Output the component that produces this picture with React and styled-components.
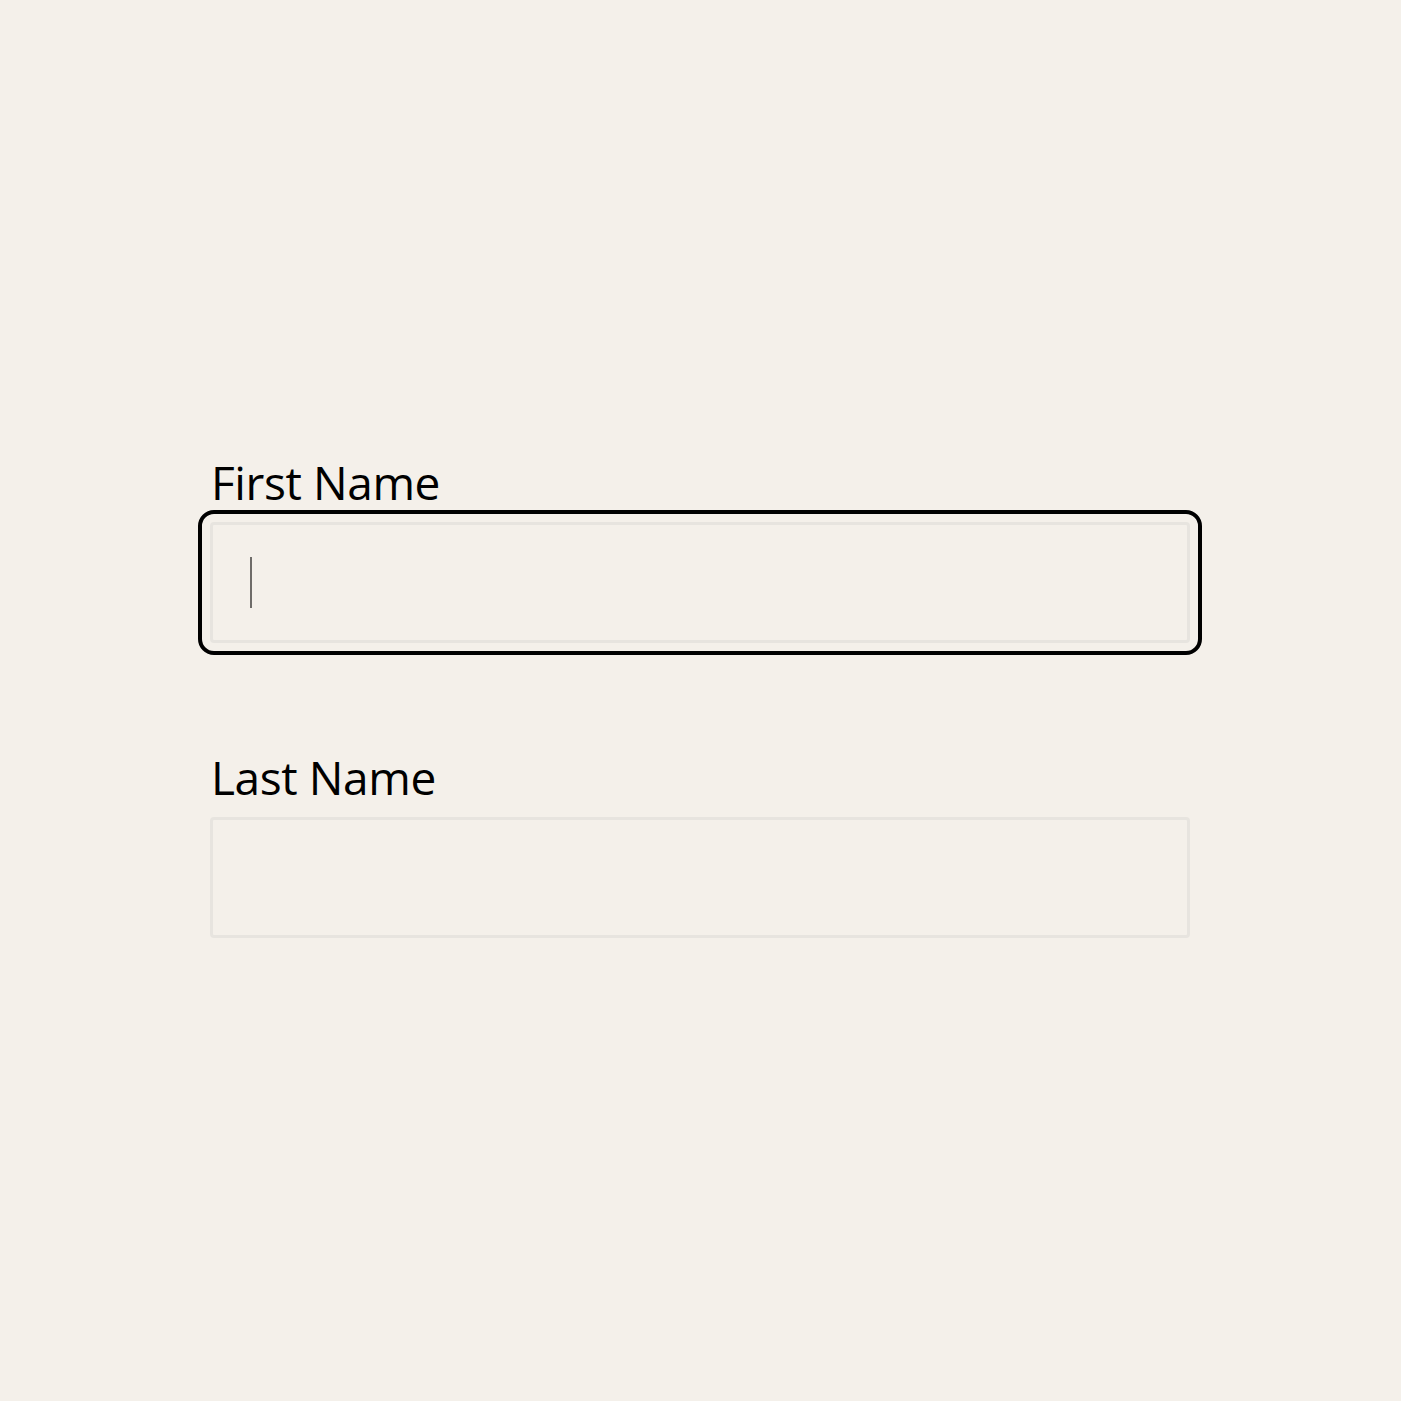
import React from 'react';
import styled, { createGlobalStyle } from 'styled-components';

const GlobalStyle = createGlobalStyle`
  html, body {
    margin: 0;
    padding: 0;
    background: #f4f0ea;
  }
  body {
    font-family: "Open Sans", "Noto Sans", sans-serif;
    color: #000;
  }
`;

const Page = styled.div`
  min-height: 1401px;
  padding: 452px 0 0 210px;
  box-sizing: border-box;
`;

const Form = styled.form`
  width: 980px;
  display: flex;
  flex-direction: column;
  gap: 104px;
`;

const Field = styled.div`
  display: flex;
  flex-direction: column;
  gap: 10px;
`;

const Label = styled.label`
  font-size: 46px;
  line-height: 60px;
  letter-spacing: -0.4px;
  padding-left: 1px;
`;

const InputWrap = styled.div`
  position: relative;
  height: 121px;
  border-radius: 4px;
  outline: ${(p) => (p.$focused ? '4px solid #000' : 'none')};
  outline-offset: 8px;
`;

const Input = styled.input`
  width: 100%;
  height: 100%;
  box-sizing: border-box;
  background: #f4f0ea;
  border: 3px solid #e7e4df;
  border-radius: 4px;
  padding: 0 37px;
  font: inherit;
  font-size: 40px;
  outline: none;
  caret-color: transparent;
`;

// drawn text cursor for the focused field
const Caret = styled.span`
  position: absolute;
  left: 40px;
  top: 35px;
  width: 2px;
  height: 51px;
  background: #6e6c69;
`;

export default function App() {
  return (
    <Page>
      <GlobalStyle />
      <Form onSubmit={(e) => e.preventDefault()}>
        <Field>
          <Label htmlFor="first-name">First Name</Label>
          <InputWrap $focused>
            <Input id="first-name" type="text" />
            <Caret />
          </InputWrap>
        </Field>
        <Field>
          <Label htmlFor="last-name">Last Name</Label>
          <InputWrap>
            <Input id="last-name" type="text" />
          </InputWrap>
        </Field>
      </Form>
    </Page>
  );
}
